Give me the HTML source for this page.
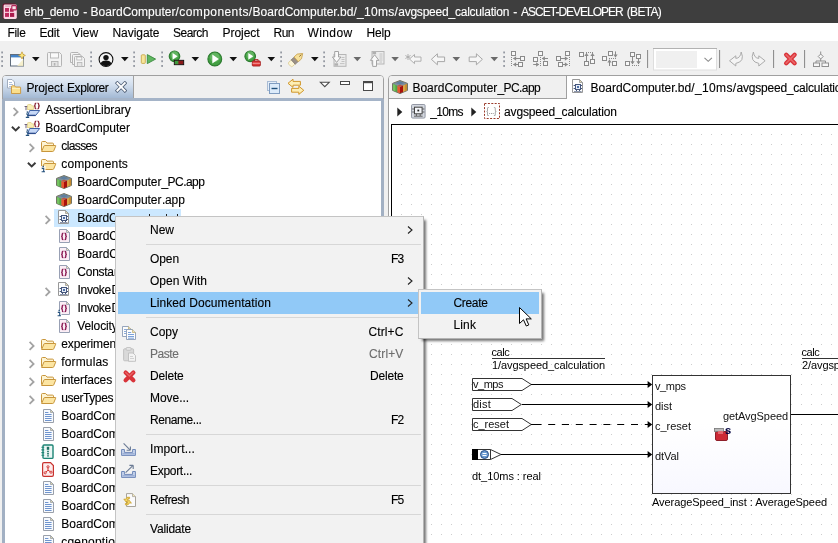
<!DOCTYPE html>
<html><head><meta charset="utf-8"><title>ASCET-DEVELOPER</title>
<style>
html,body{margin:0;padding:0;}
body{width:838px;height:543px;overflow:hidden;background:#f0f0f0;font-family:"Liberation Sans",sans-serif;position:relative;}
#root{position:absolute;left:0;top:0;width:838px;height:543px;overflow:hidden;will-change:transform;}
#root div,#root span,#root svg{position:absolute;box-sizing:border-box;}
.t{white-space:nowrap;display:block;-webkit-text-stroke:0.12px currentColor;}
.d{font-family:"Liberation Sans",sans-serif;-webkit-text-stroke:0;}
</style></head><body><div id="root">
<div style="left:0px;top:0px;width:838px;height:23px;background:#3e3e3e;"></div>
<span class="t " style="left:24px;top:3.50px;height:16px;line-height:16px;font-size:12px;color:#fff;letter-spacing:-0.214px;">ehb_demo</span>
<span class="t " style="left:83.3px;top:3.50px;height:16px;line-height:16px;font-size:12px;color:#fff;">-</span>
<span class="t " style="left:90.5px;top:3.50px;height:16px;line-height:16px;font-size:12px;color:#fff;letter-spacing:0.030px;">BoardComputer</span>
<span class="t " style="left:175.5px;top:3.50px;height:16px;line-height:16px;font-size:12px;color:#fff;letter-spacing:0.421px;">/components/</span>
<span class="t " style="left:252.6px;top:3.50px;height:16px;line-height:16px;font-size:12px;color:#fff;letter-spacing:0.004px;">BoardComputer.bd</span>
<span class="t " style="left:353.5px;top:3.50px;height:16px;line-height:16px;font-size:12px;color:#fff;letter-spacing:0.259px;">/_10ms/</span>
<span class="t " style="left:398.2px;top:3.50px;height:16px;line-height:16px;font-size:12px;color:#fff;letter-spacing:-0.221px;">avgspeed_calculation</span>
<span class="t " style="left:513.3px;top:3.50px;height:16px;line-height:16px;font-size:12px;color:#fff;">-</span>
<span class="t " style="left:521px;top:3.50px;height:16px;line-height:16px;font-size:12px;color:#fff;letter-spacing:-0.994px;">ASCET-DEVELOPER</span>
<span class="t " style="left:626.8px;top:3.50px;height:16px;line-height:16px;font-size:12px;color:#fff;letter-spacing:-0.708px;">(BETA)</span>
<div style="left:0px;top:23px;width:838px;height:18px;background:#fff;"></div>
<span class="t " style="left:7.5px;top:24.50px;height:16px;line-height:16px;font-size:12px;color:#000;letter-spacing:-0.334px;">File</span>
<span class="t " style="left:39.5px;top:24.50px;height:16px;line-height:16px;font-size:12px;color:#000;letter-spacing:-0.170px;">Edit</span>
<span class="t " style="left:72.5px;top:24.50px;height:16px;line-height:16px;font-size:12px;color:#000;letter-spacing:-0.074px;">View</span>
<span class="t " style="left:112.5px;top:24.50px;height:16px;line-height:16px;font-size:12px;color:#000;letter-spacing:-0.045px;">Navigate</span>
<span class="t " style="left:173px;top:24.50px;height:16px;line-height:16px;font-size:12px;color:#000;letter-spacing:-0.504px;">Search</span>
<span class="t " style="left:222.5px;top:24.50px;height:16px;line-height:16px;font-size:12px;color:#000;letter-spacing:-0.050px;">Project</span>
<span class="t " style="left:273.5px;top:24.50px;height:16px;line-height:16px;font-size:12px;color:#000;letter-spacing:-0.505px;">Run</span>
<span class="t " style="left:307.5px;top:24.50px;height:16px;line-height:16px;font-size:12px;color:#000;letter-spacing:0.387px;">Window</span>
<span class="t " style="left:366.5px;top:24.50px;height:16px;line-height:16px;font-size:12px;color:#000;letter-spacing:-0.170px;">Help</span>
<div style="left:0px;top:41px;width:838px;height:34px;background:#f0f0f0;"></div>
<div style="left:2px;top:75px;width:382px;height:470px;background:#fff;border:1px solid #a0a0a0;border-radius:4px 4px 0 0;"></div>
<div style="left:3px;top:76px;width:380px;height:22px;background:#f0f0f0;border-radius:3px 3px 0 0;"></div>
<div style="left:3px;top:76px;width:131px;height:22px;background:linear-gradient(#e9eff7,#d3dfee 40%,#a3b9d4);border-right:1px solid #a0a0a0;border-radius:3px 0 0 0;"></div>
<div style="left:3px;top:98px;width:380px;height:3px;background:#a5b4c8;"></div>
<div style="left:2px;top:99px;width:3px;height:444px;background:#a2b0c3;"></div>
<div style="left:381px;top:99px;width:3px;height:444px;background:#a2b0c3;"></div>
<span class="t " style="left:26.4px;top:79.50px;height:16px;line-height:16px;font-size:12px;color:#000;letter-spacing:-0.078px;">Project</span>
<span class="t " style="left:67px;top:79.50px;height:16px;line-height:16px;font-size:12px;color:#000;letter-spacing:-0.423px;">Explorer</span>
<span class="t " style="left:45.3px;top:102.00px;height:16px;line-height:16px;font-size:12px;color:#000;letter-spacing:-0.088px;">AssertionLibrary</span>
<span class="t " style="left:45.3px;top:120.00px;height:16px;line-height:16px;font-size:12px;color:#000;letter-spacing:-0.001px;">BoardComputer</span>
<span class="t " style="left:61.3px;top:138.00px;height:16px;line-height:16px;font-size:12px;color:#000;letter-spacing:-0.616px;">classes</span>
<span class="t " style="left:61.3px;top:156.00px;height:16px;line-height:16px;font-size:12px;color:#000;letter-spacing:0.133px;">components</span>
<span class="t " style="left:77.3px;top:174.00px;height:16px;line-height:16px;font-size:12px;color:#000;letter-spacing:-0.047px;">BoardComputer</span>
<span class="t " style="left:161.5px;top:174.00px;height:16px;line-height:16px;font-size:12px;color:#000;letter-spacing:-0.557px;">_PC.app</span>
<span class="t " style="left:77.3px;top:192.00px;height:16px;line-height:16px;font-size:12px;color:#000;letter-spacing:-0.047px;">BoardComputer</span>
<span class="t " style="left:161.9px;top:192.00px;height:16px;line-height:16px;font-size:12px;color:#000;letter-spacing:-0.139px;">.app</span>
<div style="left:54px;top:209px;width:127px;height:18px;background:#cce8ff;"></div>
<span class="t " style="left:77.3px;top:210.00px;height:16px;line-height:16px;font-size:12px;color:#000;letter-spacing:-0.047px;">BoardComputer</span>
<span class="t " style="left:161.9px;top:210.00px;height:16px;line-height:16px;font-size:12px;color:#000;letter-spacing:0.473px;">.bd</span>
<span class="t " style="left:77.3px;top:228.00px;height:16px;line-height:16px;font-size:12px;color:#000;letter-spacing:-0.001px;">BoardComputer</span>
<span class="t " style="left:162.4px;top:228.00px;height:16px;line-height:16px;font-size:12px;color:#000;">.esdl</span>
<span class="t " style="left:77.3px;top:246.00px;height:16px;line-height:16px;font-size:12px;color:#000;letter-spacing:-0.001px;">BoardComputer</span>
<span class="t " style="left:162.4px;top:246.00px;height:16px;line-height:16px;font-size:12px;color:#000;">Types.esdl</span>
<span class="t " style="left:77.3px;top:264.00px;height:16px;line-height:16px;font-size:12px;color:#000;letter-spacing:-0.254px;">Consta</span>
<span class="t " style="left:114px;top:264.00px;height:16px;line-height:16px;font-size:12px;color:#000;">nts.esdl</span>
<span class="t " style="left:77.6px;top:282.00px;height:16px;line-height:16px;font-size:12px;color:#000;letter-spacing:-0.359px;">Invoke</span>
<span class="t " style="left:111.6px;top:282.00px;height:16px;line-height:16px;font-size:12px;color:#000;">Display.bd</span>
<span class="t " style="left:77.6px;top:300.00px;height:16px;line-height:16px;font-size:12px;color:#000;letter-spacing:-0.359px;">Invoke</span>
<span class="t " style="left:111.6px;top:300.00px;height:16px;line-height:16px;font-size:12px;color:#000;">Display.esdl</span>
<span class="t " style="left:77.3px;top:318.00px;height:16px;line-height:16px;font-size:12px;color:#000;letter-spacing:-0.122px;">Velocit</span>
<span class="t " style="left:111.8px;top:318.00px;height:16px;line-height:16px;font-size:12px;color:#000;">yCalculation.esdl</span>
<span class="t " style="left:61.3px;top:336.00px;height:16px;line-height:16px;font-size:12px;color:#000;letter-spacing:-0.151px;">experiments</span>
<span class="t " style="left:61.3px;top:354.00px;height:16px;line-height:16px;font-size:12px;color:#000;letter-spacing:0.136px;">formulas</span>
<span class="t " style="left:61.3px;top:372.00px;height:16px;line-height:16px;font-size:12px;color:#000;letter-spacing:-0.133px;">interfaces</span>
<span class="t " style="left:61.3px;top:390.00px;height:16px;line-height:16px;font-size:12px;color:#000;letter-spacing:-0.407px;">userTypes</span>
<span class="t " style="left:61.3px;top:408.00px;height:16px;line-height:16px;font-size:12px;color:#000;letter-spacing:-0.001px;">BoardComputer</span>
<span class="t " style="left:146.4px;top:408.00px;height:16px;line-height:16px;font-size:12px;color:#000;">.amd</span>
<span class="t " style="left:61.3px;top:426.00px;height:16px;line-height:16px;font-size:12px;color:#000;letter-spacing:-0.001px;">BoardComputer</span>
<span class="t " style="left:146.4px;top:426.00px;height:16px;line-height:16px;font-size:12px;color:#000;">.app</span>
<span class="t " style="left:61.3px;top:444.00px;height:16px;line-height:16px;font-size:12px;color:#000;letter-spacing:-0.001px;">BoardComputer</span>
<span class="t " style="left:146.4px;top:444.00px;height:16px;line-height:16px;font-size:12px;color:#000;">.html</span>
<span class="t " style="left:61.3px;top:462.00px;height:16px;line-height:16px;font-size:12px;color:#000;letter-spacing:-0.001px;">BoardComputer</span>
<span class="t " style="left:146.4px;top:462.00px;height:16px;line-height:16px;font-size:12px;color:#000;">.pdf</span>
<span class="t " style="left:61.3px;top:480.00px;height:16px;line-height:16px;font-size:12px;color:#000;letter-spacing:-0.001px;">BoardComputer</span>
<span class="t " style="left:146.4px;top:480.00px;height:16px;line-height:16px;font-size:12px;color:#000;">.a2l</span>
<span class="t " style="left:61.3px;top:498.00px;height:16px;line-height:16px;font-size:12px;color:#000;letter-spacing:-0.001px;">BoardComputer</span>
<span class="t " style="left:146.4px;top:498.00px;height:16px;line-height:16px;font-size:12px;color:#000;">.hex</span>
<span class="t " style="left:61.3px;top:516.00px;height:16px;line-height:16px;font-size:12px;color:#000;letter-spacing:-0.001px;">BoardComputer</span>
<span class="t " style="left:146.4px;top:516.00px;height:16px;line-height:16px;font-size:12px;color:#000;">.map</span>
<span class="t " style="left:61.3px;top:534.00px;height:16px;line-height:16px;font-size:12px;color:#000;letter-spacing:0.184px;">cgenoptio</span>
<span class="t " style="left:115.2px;top:534.00px;height:16px;line-height:16px;font-size:12px;color:#000;">ns.ini</span>
<div style="left:388px;top:75px;width:460px;height:470px;background:#fff;border:1px solid #a0a0a0;border-radius:4px 0 0 0;"></div>
<div style="left:389px;top:76px;width:177px;height:22px;background:#f0f0f0;border-radius:3px 0 0 0;"></div>
<div style="left:389px;top:98px;width:460px;height:1px;background:#a0a0a0;"></div>
<div style="left:566px;top:76px;width:280px;height:23px;background:#fff;border-left:1px solid #a0a0a0;"></div>
<span class="t " style="left:412.4px;top:79.50px;height:16px;line-height:16px;font-size:12px;color:#000;letter-spacing:0.022px;">BoardComputer</span>
<span class="t " style="left:497.4px;top:79.50px;height:16px;line-height:16px;font-size:12px;color:#000;letter-spacing:-0.557px;">_PC.app</span>
<span class="t " style="left:590.6px;top:79.50px;height:16px;line-height:16px;font-size:12px;color:#000;letter-spacing:-0.008px;">BoardComputer.bd</span>
<span class="t " style="left:691.3px;top:79.50px;height:16px;line-height:16px;font-size:12px;color:#000;letter-spacing:0.359px;">/_10ms/</span>
<span class="t " style="left:736.6px;top:79.50px;height:16px;line-height:16px;font-size:12px;color:#000;letter-spacing:-0.221px;">avgspeed_calculation</span>
<span class="t " style="left:430.2px;top:104.00px;height:16px;line-height:16px;font-size:12px;color:#000;letter-spacing:-0.684px;">_10ms</span>
<span class="t " style="left:504px;top:104.00px;height:16px;line-height:16px;font-size:12px;color:#000;letter-spacing:-0.131px;">avgspeed_calculation</span>
<div style="left:391px;top:124px;width:450px;height:420px;background-color:#fff;border-left:1px solid #000;border-top:1px solid #000;background-image:radial-gradient(circle at 0.5px 0.5px,#cdcdcd 0.6px,transparent 0.8px);background-size:10px 10px;background-position:-1px -1px;"></div>
<svg style="left:0px;top:0px;" width="838" height="76" viewBox="0 0 838 76"><rect x="1.3" y="51.5" width="1.6" height="1.9" fill="#8b909a"/><rect x="1.3" y="56" width="1.6" height="1.9" fill="#8b909a"/><rect x="1.3" y="60.3" width="1.6" height="1.9" fill="#8b909a"/><rect x="1.3" y="65" width="1.6" height="1.9" fill="#8b909a"/><rect x="90.3" y="51.5" width="1.6" height="1.9" fill="#8b909a"/><rect x="90.3" y="56" width="1.6" height="1.9" fill="#8b909a"/><rect x="90.3" y="60.3" width="1.6" height="1.9" fill="#8b909a"/><rect x="90.3" y="65" width="1.6" height="1.9" fill="#8b909a"/><rect x="133.3" y="51.5" width="1.6" height="1.9" fill="#8b909a"/><rect x="133.3" y="56" width="1.6" height="1.9" fill="#8b909a"/><rect x="133.3" y="60.3" width="1.6" height="1.9" fill="#8b909a"/><rect x="133.3" y="65" width="1.6" height="1.9" fill="#8b909a"/><rect x="161.3" y="51.5" width="1.6" height="1.9" fill="#8b909a"/><rect x="161.3" y="56" width="1.6" height="1.9" fill="#8b909a"/><rect x="161.3" y="60.3" width="1.6" height="1.9" fill="#8b909a"/><rect x="161.3" y="65" width="1.6" height="1.9" fill="#8b909a"/><rect x="280.3" y="51.5" width="1.6" height="1.9" fill="#8b909a"/><rect x="280.3" y="56" width="1.6" height="1.9" fill="#8b909a"/><rect x="280.3" y="60.3" width="1.6" height="1.9" fill="#8b909a"/><rect x="280.3" y="65" width="1.6" height="1.9" fill="#8b909a"/><rect x="323.3" y="51.5" width="1.6" height="1.9" fill="#8b909a"/><rect x="323.3" y="56" width="1.6" height="1.9" fill="#8b909a"/><rect x="323.3" y="60.3" width="1.6" height="1.9" fill="#8b909a"/><rect x="323.3" y="65" width="1.6" height="1.9" fill="#8b909a"/><rect x="503.3" y="51.5" width="1.6" height="1.9" fill="#8b909a"/><rect x="503.3" y="56" width="1.6" height="1.9" fill="#8b909a"/><rect x="503.3" y="60.3" width="1.6" height="1.9" fill="#8b909a"/><rect x="503.3" y="65" width="1.6" height="1.9" fill="#8b909a"/><path d="M32 57 h7.6 l-3.8 4.3 z" fill="#111"/><path d="M121 57 h7.6 l-3.8 4.3 z" fill="#111"/><path d="M191.5 57 h7.6 l-3.8 4.3 z" fill="#111"/><path d="M229.5 57 h7.6 l-3.8 4.3 z" fill="#111"/><path d="M267.5 57 h7.6 l-3.8 4.3 z" fill="#111"/><path d="M311 57 h7.6 l-3.8 4.3 z" fill="#111"/><path d="M353.5 57 h7.6 l-3.8 4.3 z" fill="#6a6a6a"/><path d="M391.3 57 h7.6 l-3.8 4.3 z" fill="#6a6a6a"/><path d="M452.5 57 h7.6 l-3.8 4.3 z" fill="#6a6a6a"/><path d="M490.5 57 h7.6 l-3.8 4.3 z" fill="#6a6a6a"/><rect x="647.1" y="50" width="1" height="18" fill="#858585"/><rect x="719.1" y="50" width="1" height="18" fill="#858585"/><rect x="773.1" y="50" width="1" height="18" fill="#858585"/><rect x="804.1" y="50" width="1" height="18" fill="#858585"/><g transform="translate(10 52)"><rect x=".5" y="2.5" width="13" height="11.5" fill="#fbfdff" stroke="#5f6c7c"/><rect x="1" y="3" width="12" height="2.4" fill="#4482c6"/><path d="M7 14 L13.5 7 V14 Z" fill="#f5ecc0" opacity=".8"/><path d="M12 -.2 L13.1 2.3 L15.4 3.4 L13.1 4.5 L12 7 L10.9 4.5 L8.6 3.4 L10.9 2.3 Z" fill="#fbe67a" stroke="#c9a040" stroke-width=".8"/></g><g transform="translate(47 52)"><path d="M1.5 .5 H12.5 L14.5 2.5 V13.5 Q14.5 14.5 13.5 14.5 H1.5 Q.5 14.5 .5 13.5 V1.5 Q.5 .5 1.5 .5 Z" fill="#f3f3f3" stroke="#b4b4b4"/><rect x="3.5" y=".8" width="8" height="5.2" fill="#fafafa" stroke="#b4b4b4" stroke-width=".9"/><rect x="4.5" y="9.5" width="6.5" height="5" fill="#e4e4e4" stroke="#b4b4b4" stroke-width=".9"/><rect x="6.8" y="11" width="1.6" height="2.6" fill="#b4b4b4"/></g><g transform="translate(70 52)"><path d="M1.5 .5 H8 L10.5 3 V10.5 H.5 V1.5 Q.5 .5 1.5 .5Z" fill="#f3f3f3" stroke="#b4b4b4"/><path d="M3.5 2.5 H10 L12.5 5 V12.5 H2.5 V3.5 Q2.5 2.5 3.5 2.5Z" fill="#f3f3f3" stroke="#b4b4b4"/><path d="M5.5 4.5 H12.5 L14.5 6.5 V14.5 H4.5 V5.5 Q4.5 4.5 5.5 4.5Z" fill="#f3f3f3" stroke="#b4b4b4"/><rect x="6.8" y="5" width="5" height="3" fill="#fafafa" stroke="#b4b4b4" stroke-width=".8"/><rect x="7.3" y="10.5" width="4.6" height="4" fill="#e4e4e4" stroke="#b4b4b4" stroke-width=".8"/></g><g transform="translate(98.5 52)"><circle cx="7.5" cy="7.5" r="6.9" fill="#f4f4f4" stroke="#111" stroke-width="1.1"/><circle cx="7.5" cy="5.6" r="2.7" fill="#111"/><path d="M2.2 11.6 Q3 8.6 7.5 8.6 Q12 8.6 12.8 11.6 Q10.8 14.2 7.5 14.2 Q4.2 14.2 2.2 11.6 Z" fill="#111"/></g><g transform="translate(140 52)"><rect x="1.3" y="2.8" width="4" height="8.6" rx=".8" fill="#f7e59a" stroke="#c8a94a" stroke-width=".9"/><path d="M7.3 2.6 L15.6 7.1 L7.3 11.6 Z" fill="#5fb660" stroke="#3a8a3d" stroke-width=".9" stroke-linejoin="round"/></g><circle cx="174.5" cy="56.3" r="5.3" fill="#43a043" stroke="#2b7a2e" stroke-width="1.1"/><circle cx="174.5" cy="54.974999999999994" r="3.7099999999999995" fill="#7cc77a" opacity=".55"/><path d="M172.592 52.907999999999994 L177.574 56.3 L172.592 59.692 Z" fill="#fff"/><rect x="174.3" y="60.3" width="9.4" height="4.4" fill="#8b1a1a" stroke="#111" stroke-width=".9"/><rect x="174.8" y="60.8" width="3.6" height="3.4" fill="#3f9a3f"/><circle cx="214.8" cy="59" r="6.9" fill="#43a043" stroke="#2b7a2e" stroke-width="1.1"/><circle cx="214.8" cy="57.275" r="4.83" fill="#7cc77a" opacity=".55"/><path d="M212.316 54.584 L218.80200000000002 59 L212.316 63.416 Z" fill="#fff"/><circle cx="250.2" cy="56.3" r="5.3" fill="#43a043" stroke="#2b7a2e" stroke-width="1.1"/><circle cx="250.2" cy="54.974999999999994" r="3.7099999999999995" fill="#7cc77a" opacity=".55"/><path d="M248.292 52.907999999999994 L253.274 56.3 L248.292 59.692 Z" fill="#fff"/><rect x="252.3" y="61" width="8" height="5" rx=".8" fill="#e03a3a" stroke="#a01818" stroke-width=".9"/><path d="M254.5 61 v-1.4 h3.6 v1.4" fill="none" stroke="#a01818" stroke-width=".9"/><path d="M252.5 63.3 h7.6" stroke="#f7b0b0" stroke-width=".8"/><g transform="translate(288 51.5)"><g transform="rotate(-42 8 8)"><rect x="-0.5" y="5.2" width="5.2" height="5.6" rx="1.6" fill="#fdf6d8" stroke="#d9c78a" stroke-width=".7"/><rect x="4.2" y="5" width="4" height="6" fill="#9a9088" stroke="#756c64" stroke-width=".6"/><path d="M8.2 4.8 H12.5 L17 8 L12.5 11.2 H8.2 Z" fill="#f6e09a" stroke="#c9a24e" stroke-width=".8"/><path d="M12.4 8 H15.2" stroke="#7a5a20" stroke-width=".8"/></g></g><g transform="translate(332 51)"><rect x="2" y="3.5" width="12" height="11.8" fill="#ececec" stroke="#b6b6b6"/><path d="M9.5 6.5h3M9.5 8.5h3M9.5 10.5h3M8 12.6h4.5" stroke="#bdbdbd" stroke-width=".9"/><rect x="2.5" y="12.3" width="3.6" height="2.4" fill="#b0b0b0"/><path d="M2.7 .5 H6.5 V6 H8.9 L4.6 11.4 L.4 6 H2.7 Z" fill="#fafafa" stroke="#a4a4a4" stroke-width="1" stroke-linejoin="round"/></g><g transform="translate(370 51)"><rect x="2" y=".5" width="12" height="12.5" fill="#ececec" stroke="#b6b6b6"/><path d="M9.5 3h3M9.5 5h3M9.5 7h3M9.5 9h3M9.5 11h2.5" stroke="#bdbdbd" stroke-width=".9"/><rect x="2.5" y="1" width="3.6" height="2.2" fill="#b0b0b0"/><path d="M2.7 15.4 H6.5 V9.4 H8.9 L4.6 3.8 L.4 9.4 H2.7 Z" fill="#fafafa" stroke="#a4a4a4" stroke-width="1" stroke-linejoin="round"/></g><g transform="translate(405 51)"><path d="M3 3 v6 M.4 4.5 l5.2 3 M.4 7.5 l5.2 -3" stroke="#a8a8a8" stroke-width=".9"/><path d="M4.5 8 L9.5 3.5 V6 H16 V10.2 H9.5 V12.6 Z" fill="#f6f6f6" stroke="#a8a8a8" stroke-width=".9"/></g><g transform="translate(430.6 51.8)"><path d="M.8 7.5 L6.8 2 V5.2 H14 V9.8 H6.8 V13 Z" fill="#f6f6f6" stroke="#a8a8a8" stroke-width="1" stroke-linejoin="round"/></g><g transform="translate(483.20000000000005 51.8) scale(-1 1)"><path d="M.8 7.5 L6.8 2 V5.2 H14 V9.8 H6.8 V13 Z" fill="#f6f6f6" stroke="#a8a8a8" stroke-width="1" stroke-linejoin="round"/></g><rect x="511.5" y="51.5" width="4" height="4" fill="#f7f7f7" stroke="#8a8a8a" stroke-width="1"/><rect x="520.5" y="56.5" width="4" height="4" fill="#f7f7f7" stroke="#8a8a8a" stroke-width="1"/><rect x="518.5" y="62.5" width="4" height="4" fill="#f7f7f7" stroke="#8a8a8a" stroke-width="1"/><path d="M511.5 57 V66" stroke="#8a8a8a" stroke-width="1" stroke-dasharray="1 1"/><path d="M513.4 58.5 H520" stroke="#8a8a8a" stroke-width="1"/><path d="M513.1 58.5 l3 -2.2 v4.4 z" fill="#8a8a8a"/><path d="M513.4 64.5 H518" stroke="#8a8a8a" stroke-width="1"/><path d="M513.1 64.5 l3 -2.2 v4.4 z" fill="#8a8a8a"/><rect x="538.5" y="51.5" width="4" height="4" fill="#f7f7f7" stroke="#8a8a8a" stroke-width="1"/><rect x="533.5" y="57.5" width="4" height="4" fill="#f7f7f7" stroke="#8a8a8a" stroke-width="1"/><rect x="543.5" y="61.5" width="4" height="4" fill="#f7f7f7" stroke="#8a8a8a" stroke-width="1"/><path d="M540.5 57 V66" stroke="#8a8a8a" stroke-width="1" stroke-dasharray="1 1"/><path d="M542.2 58.5 H548" stroke="#8a8a8a" stroke-width="1"/><path d="M541.9000000000001 58.5 l3 -2.2 v4.4 z" fill="#8a8a8a"/><path d="M533.2 64.5 H538.8" stroke="#8a8a8a" stroke-width="1"/><path d="M539.0999999999999 64.5 l-3 -2.2 v4.4 z" fill="#8a8a8a"/><rect x="565.5" y="51.5" width="4" height="4" fill="#f7f7f7" stroke="#8a8a8a" stroke-width="1"/><rect x="556.5" y="56.5" width="4" height="4" fill="#f7f7f7" stroke="#8a8a8a" stroke-width="1"/><rect x="558.5" y="62.5" width="4" height="4" fill="#f7f7f7" stroke="#8a8a8a" stroke-width="1"/><path d="M569.5 57 V66" stroke="#8a8a8a" stroke-width="1" stroke-dasharray="1 1"/><path d="M561 58.5 H567.6" stroke="#8a8a8a" stroke-width="1"/><path d="M567.9 58.5 l-3 -2.2 v4.4 z" fill="#8a8a8a"/><path d="M563 64.5 H567.6" stroke="#8a8a8a" stroke-width="1"/><path d="M567.9 64.5 l-3 -2.2 v4.4 z" fill="#8a8a8a"/><rect x="579.5" y="52.5" width="4" height="4" fill="#f7f7f7" stroke="#8a8a8a" stroke-width="1"/><rect x="590.5" y="59.5" width="4" height="4" fill="#f7f7f7" stroke="#8a8a8a" stroke-width="1"/><rect x="584.5" y="61.5" width="4" height="4" fill="#f7f7f7" stroke="#8a8a8a" stroke-width="1"/><path d="M586 52.5 H594" stroke="#8a8a8a" stroke-width="1" stroke-dasharray="1 1"/><path d="M586.5 53.2 V61" stroke="#8a8a8a" stroke-width="1"/><path d="M586.5 52.900000000000006 l-2.2 3 h4.4 z" fill="#8a8a8a"/><path d="M592.5 53.2 V59" stroke="#8a8a8a" stroke-width="1"/><path d="M592.5 52.900000000000006 l-2.2 3 h4.4 z" fill="#8a8a8a"/><rect x="608.5" y="51.5" width="4" height="4" fill="#f7f7f7" stroke="#8a8a8a" stroke-width="1"/><rect x="602.5" y="56.5" width="4" height="4" fill="#f7f7f7" stroke="#8a8a8a" stroke-width="1"/><rect x="612.5" y="61.5" width="4" height="4" fill="#f7f7f7" stroke="#8a8a8a" stroke-width="1"/><path d="M609 58.5 H617" stroke="#8a8a8a" stroke-width="1" stroke-dasharray="1 1"/><path d="M615.5 51.4 V57.2" stroke="#8a8a8a" stroke-width="1"/><path d="M615.5 57.5 l-2.2 -3 h4.4 z" fill="#8a8a8a"/><path d="M609.5 59.8 V66" stroke="#8a8a8a" stroke-width="1"/><path d="M609.5 59.5 l-2.2 3 h4.4 z" fill="#8a8a8a"/><rect x="630.5" y="52.5" width="4" height="4" fill="#f7f7f7" stroke="#8a8a8a" stroke-width="1"/><rect x="636.5" y="54.5" width="4" height="4" fill="#f7f7f7" stroke="#8a8a8a" stroke-width="1"/><rect x="625.5" y="61.5" width="4" height="4" fill="#f7f7f7" stroke="#8a8a8a" stroke-width="1"/><path d="M632 65.5 H640" stroke="#8a8a8a" stroke-width="1" stroke-dasharray="1 1"/><path d="M632.5 57 V64" stroke="#8a8a8a" stroke-width="1"/><path d="M632.5 64.3 l-2.2 -3 h4.4 z" fill="#8a8a8a"/><path d="M638.5 59 V64" stroke="#8a8a8a" stroke-width="1"/><path d="M638.5 64.3 l-2.2 -3 h4.4 z" fill="#8a8a8a"/><rect x="653.5" y="48.5" width="63" height="21.5" fill="#fff" stroke="#dedede"/><path d="M653 48.5 H717" stroke="#b2b2b2"/><rect x="656" y="51" width="41" height="17" fill="#f0f0f0"/><path d="M704.5 57.8 L708.2 61.3 L711.9 57.8" fill="none" stroke="#8a8a8a" stroke-width="1.1"/><g transform="translate(728.8 51.2)"><path d="M.7 9.6 L7 4.6 V7.2 Q11.6 7 12.4 .8 Q16.4 10.4 7 12.2 V14.8 Z" fill="#f4f4f4" stroke="#aaaaaa" stroke-width="1" stroke-linejoin="round"/></g><g transform="translate(765.8 51.2) scale(-1 1)"><path d="M.7 9.6 L7 4.6 V7.2 Q11.6 7 12.4 .8 Q16.4 10.4 7 12.2 V14.8 Z" fill="#f4f4f4" stroke="#aaaaaa" stroke-width="1" stroke-linejoin="round"/></g><path d="M786.2 54.8 L794.6 63.2 M794.6 54.8 L786.2 63.2" stroke="#d83238" stroke-width="4.4" stroke-linecap="round"/><path d="M786.2 54.8 L794.6 63.2 M794.6 54.8 L786.2 63.2" stroke="#f27a7c" stroke-width="1.8" stroke-linecap="round" opacity=".7"/><g transform="translate(813 51)"><path d="M7.7 .5 V3 M7.7 8 V10 M3 12 V10 H12.5 V12" fill="none" stroke="#8f8f8f"/><path d="M7.7 3 L10.2 5.5 L7.7 8 L5.2 5.5 Z" fill="#f6f6f6" stroke="#8f8f8f"/><rect x=".5" y="12" width="6" height="3.5" fill="#f6f6f6" stroke="#8f8f8f"/><rect x="9" y="12" width="6.5" height="3.5" fill="#f6f6f6" stroke="#8f8f8f"/></g></svg>
<svg style="left:2px;top:3px;" width="17" height="17" viewBox="0 0 17 17"><rect x=".6" y=".6" width="13.6" height="15.2" rx="1.6" fill="#6d0f2c"/><rect x="1.6" y="1.4" width="13.2" height="14.6" rx="1.4" fill="#fbd6e4"/><path d="M3.2 3.1 H8.4" stroke="#c9a3b2" stroke-width="1"/><rect x="3" y="5" width="4" height="3.8" fill="#bd2a5e"/><rect x="8" y="5.4" width="3.6" height="3.4" fill="#b42256"/><rect x="3" y="9.9" width="4" height="4" fill="#bd2a5e"/><rect x="8" y="9.9" width="4.2" height="4" fill="#aa1a4c"/><rect x="9.8" y="2.6" width="4.6" height="4.2" rx=".6" fill="#fbe4ec" stroke="#b12a5a" stroke-width="1.2"/></svg>
<svg style="left:12px;top:107px;" width="8" height="10" viewBox="0 0 8 10"><path d="M1.6 .9 L5.6 4.9 L1.6 8.9" fill="none" stroke="#a3a3a3" stroke-width="1.8"/></svg>
<svg style="left:24px;top:102px;overflow:visible;" width="17" height="17" viewBox="0 0 17 17"><path d="M3.5 8 V3.4 Q3.5 2.5 4.4 2.5 H7 L8.2 3.9 H9.6 V7.5 H4" fill="#f9efb6" stroke="#e4d28e" stroke-width=".9"/><path d="M.6 4.5 H3.2 M2 4.5 V8.2" stroke="#6e6078" stroke-width="1" fill="none"/><path d="M3.6 13.5 L5.7 8.5 H15.7 L11.6 13.5 Z" fill="#c6d8f6" stroke="#3f62a4" stroke-width="1" stroke-linejoin="round"/><path d="M3.8 13.4 H11.6" stroke="#2c4c8c" stroke-width="1.4"/><path d="M12.299999999999999 1 Q11.1 1 11.1 2.0633333333333335 V3.0300000000000002 Q11.1 3.9 10.0 3.9 Q11.1 3.9 11.1 4.77 V5.736666666666667 Q11.1 6.8 12.299999999999999 6.8 M13.5 1 Q14.7 1 14.7 2.0633333333333335 V3.0300000000000002 Q14.7 3.9 15.799999999999999 3.9 Q14.7 3.9 14.7 4.77 V5.736666666666667 Q14.7 6.8 13.5 6.8" fill="none" stroke="#8c2838" stroke-width="1.25"/><rect x="2.7" y="9.4" width="1.4" height="1.4" fill="#24507c"/><path d="M2.0 12.0 H3.9000000000000004 V15.0 M1.8 15.4 H5.2" fill="none" stroke="#24507c" stroke-width="1.1"/></svg>
<svg style="left:11px;top:125.5px;" width="10" height="6" viewBox="0 0 10 6"><path d="M.9 .8 L4.7 4.5 L8.5 .8" fill="none" stroke="#3a3a3a" stroke-width="1.9"/></svg>
<svg style="left:24px;top:120px;overflow:visible;" width="17" height="17" viewBox="0 0 17 17"><path d="M3.5 8 V3.4 Q3.5 2.5 4.4 2.5 H7 L8.2 3.9 H9.6 V7.5 H4" fill="#f9efb6" stroke="#e4d28e" stroke-width=".9"/><path d="M.6 4.5 H3.2 M2 4.5 V8.2" stroke="#6e6078" stroke-width="1" fill="none"/><path d="M3.6 13.5 L5.7 8.5 H15.7 L11.6 13.5 Z" fill="#c6d8f6" stroke="#3f62a4" stroke-width="1" stroke-linejoin="round"/><path d="M3.8 13.4 H11.6" stroke="#2c4c8c" stroke-width="1.4"/><path d="M12.299999999999999 1 Q11.1 1 11.1 2.0633333333333335 V3.0300000000000002 Q11.1 3.9 10.0 3.9 Q11.1 3.9 11.1 4.77 V5.736666666666667 Q11.1 6.8 12.299999999999999 6.8 M13.5 1 Q14.7 1 14.7 2.0633333333333335 V3.0300000000000002 Q14.7 3.9 15.799999999999999 3.9 Q14.7 3.9 14.7 4.77 V5.736666666666667 Q14.7 6.8 13.5 6.8" fill="none" stroke="#8c2838" stroke-width="1.25"/><rect x="2.7" y="9.4" width="1.4" height="1.4" fill="#24507c"/><path d="M2.0 12.0 H3.9000000000000004 V15.0 M1.8 15.4 H5.2" fill="none" stroke="#24507c" stroke-width="1.1"/></svg>
<svg style="left:28px;top:143px;" width="8" height="10" viewBox="0 0 8 10"><path d="M1.6 .9 L5.6 4.9 L1.6 8.9" fill="none" stroke="#a3a3a3" stroke-width="1.8"/></svg>
<svg style="left:41px;top:141px;overflow:visible;" width="16" height="12" viewBox="0 0 16 12"><path d="M.5 9.5 V1.5 Q.5 .5 1.5 .5 H4.6 L6 2.1 H11.5 Q12.5 2.1 12.5 3.1 V4.5" fill="#fdf4d4" stroke="#c8963c" stroke-width="1"/><path d="M.6 10.5 L3 4.9 Q3.2 4.5 3.8 4.5 H14.4 Q15 4.5 14.7 5.2 L12.7 9.9 Q12.4 10.5 11.7 10.5 Z" fill="#fce5a2" stroke="#c8963c" stroke-width="1" stroke-linejoin="round"/></svg>
<svg style="left:27px;top:161.5px;" width="10" height="6" viewBox="0 0 10 6"><path d="M.9 .8 L4.7 4.5 L8.5 .8" fill="none" stroke="#3a3a3a" stroke-width="1.9"/></svg>
<svg style="left:41px;top:159px;overflow:visible;" width="16" height="12" viewBox="0 0 16 12"><path d="M.5 9.5 V1.5 Q.5 .5 1.5 .5 H4.6 L6 2.1 H11.5 Q12.5 2.1 12.5 3.1 V4.5" fill="#fdf4d4" stroke="#c8963c" stroke-width="1"/><path d="M.6 10.5 L3 4.9 Q3.2 4.5 3.8 4.5 H14.4 Q15 4.5 14.7 5.2 L12.7 9.9 Q12.4 10.5 11.7 10.5 Z" fill="#fce5a2" stroke="#c8963c" stroke-width="1" stroke-linejoin="round"/></svg>
<svg style="left:40.8px;top:164.6px;" width="6" height="9" viewBox="0 0 6 9"><rect x="0" y="1" width="4.6" height="7.6" fill="#fff" opacity=".85"/><rect x="1.5" y="0.8" width="1.4" height="1.4" fill="#24507c"/><path d="M0.8 3.4000000000000004 H2.7 V6.3999999999999995 M0.6 6.8 H4.0" fill="none" stroke="#24507c" stroke-width="1.1"/></svg>
<svg style="left:56px;top:175px;overflow:visible;" width="16" height="15" viewBox="0 0 16 15"><path d="M8 .5 L15.5 3.4 V10.4 L8 13.6 L.5 10.4 V3.4 Z" fill="#7f8f9c" stroke="#6b6b58" stroke-width=".9" stroke-linejoin="round"/><path d="M1 3.9 L5.4 5.7 V12.3 L1 10.3 Z" fill="#52a444"/><path d="M1 3.9 L3.4 4.9 V11.4 L1 10.3 Z" fill="#74c260"/><path d="M15 3.9 L11 5.5 V12.1 L15 10.3 Z" fill="#dca444"/><path d="M15 3.9 L13.2 4.6 V11.1 L15 10.3 Z" fill="#c48a30"/><path d="M5.4 5.7 L8 6.9 V13.2 L5.4 12.3 Z" fill="#e8582e"/><path d="M8 6.9 L11 5.5 V12.1 L8 13.2 Z" fill="#a8100c"/><path d="M3.6 2.9 L8 1.2 L12.4 2.9 L8 4.7 Z" fill="#5f7f9e"/><path d="M5.6 5.5 L8 4.7 L10.8 5.4 L8 6.7 Z" fill="#c8523a"/></svg>
<svg style="left:56px;top:193px;overflow:visible;" width="16" height="15" viewBox="0 0 16 15"><path d="M8 .5 L15.5 3.4 V10.4 L8 13.6 L.5 10.4 V3.4 Z" fill="#7f8f9c" stroke="#6b6b58" stroke-width=".9" stroke-linejoin="round"/><path d="M1 3.9 L5.4 5.7 V12.3 L1 10.3 Z" fill="#52a444"/><path d="M1 3.9 L3.4 4.9 V11.4 L1 10.3 Z" fill="#74c260"/><path d="M15 3.9 L11 5.5 V12.1 L15 10.3 Z" fill="#dca444"/><path d="M15 3.9 L13.2 4.6 V11.1 L15 10.3 Z" fill="#c48a30"/><path d="M5.4 5.7 L8 6.9 V13.2 L5.4 12.3 Z" fill="#e8582e"/><path d="M8 6.9 L11 5.5 V12.1 L8 13.2 Z" fill="#a8100c"/><path d="M3.6 2.9 L8 1.2 L12.4 2.9 L8 4.7 Z" fill="#5f7f9e"/><path d="M5.6 5.5 L8 4.7 L10.8 5.4 L8 6.7 Z" fill="#c8523a"/></svg>
<svg style="left:44px;top:215px;" width="8" height="10" viewBox="0 0 8 10"><path d="M1.6 .9 L5.6 4.9 L1.6 8.9" fill="none" stroke="#a3a3a3" stroke-width="1.8"/></svg>
<svg style="left:58px;top:210px;overflow:visible;" width="11" height="14" viewBox="0 0 11 14"><path d="M.5 .5 H7.5 L10.5 3.5 V13.5 H.5 Z" fill="#fdfdfd" stroke="#989898" stroke-width="1" stroke-linejoin="round"/><path d="M7.5 .5 V3.5 H10.5 Z" fill="#e6dcae" stroke="#989898" stroke-width=".8" stroke-linejoin="round"/><rect x="3.5" y="5.5" width="5" height="5" fill="#e8eef8" stroke="#46577c" stroke-width="1"/><rect x="5" y="7" width="2" height="2" fill="#4f70a8"/><path d="M1.6 6.5h1.6M1.6 9.5h1.6M8.8 6.5h1.2M8.8 9.5h1.2M4.5 10.8v1.4M7.5 10.8v1.4" stroke="#46577c" stroke-width="1"/><path d="M2 12.5 H9.6" stroke="#8c96ac" stroke-width="1"/></svg>
<svg style="left:59px;top:229px;overflow:visible;" width="11" height="14" viewBox="0 0 11 14"><path d="M.5 .5 H7.5 L10.5 3.5 V13.5 H.5 Z" fill="#fbeef6" stroke="#98a0b4" stroke-width="1" stroke-linejoin="round"/><path d="M7.5 .5 V3.5 H10.5 Z" fill="#ece2b6" stroke="#98a0b4" stroke-width=".8" stroke-linejoin="round"/><path d="M4.4 4.2 Q3.2 4.2 3.2 5.373333333333333 V6.44 Q3.2 7.4 2.1 7.4 Q3.2 7.4 3.2 8.36 V9.426666666666666 Q3.2 10.600000000000001 4.4 10.600000000000001 M5.6 4.2 Q6.8 4.2 6.8 5.373333333333333 V6.44 Q6.8 7.4 7.8999999999999995 7.4 Q6.8 7.4 6.8 8.36 V9.426666666666666 Q6.8 10.600000000000001 5.6 10.600000000000001" fill="none" stroke="#8a1852" stroke-width="1.35"/></svg>
<svg style="left:59px;top:247px;overflow:visible;" width="11" height="14" viewBox="0 0 11 14"><path d="M.5 .5 H7.5 L10.5 3.5 V13.5 H.5 Z" fill="#fbeef6" stroke="#98a0b4" stroke-width="1" stroke-linejoin="round"/><path d="M7.5 .5 V3.5 H10.5 Z" fill="#ece2b6" stroke="#98a0b4" stroke-width=".8" stroke-linejoin="round"/><path d="M4.4 4.2 Q3.2 4.2 3.2 5.373333333333333 V6.44 Q3.2 7.4 2.1 7.4 Q3.2 7.4 3.2 8.36 V9.426666666666666 Q3.2 10.600000000000001 4.4 10.600000000000001 M5.6 4.2 Q6.8 4.2 6.8 5.373333333333333 V6.44 Q6.8 7.4 7.8999999999999995 7.4 Q6.8 7.4 6.8 8.36 V9.426666666666666 Q6.8 10.600000000000001 5.6 10.600000000000001" fill="none" stroke="#8a1852" stroke-width="1.35"/></svg>
<svg style="left:59px;top:265px;overflow:visible;" width="11" height="14" viewBox="0 0 11 14"><path d="M.5 .5 H7.5 L10.5 3.5 V13.5 H.5 Z" fill="#fbeef6" stroke="#98a0b4" stroke-width="1" stroke-linejoin="round"/><path d="M7.5 .5 V3.5 H10.5 Z" fill="#ece2b6" stroke="#98a0b4" stroke-width=".8" stroke-linejoin="round"/><path d="M4.4 4.2 Q3.2 4.2 3.2 5.373333333333333 V6.44 Q3.2 7.4 2.1 7.4 Q3.2 7.4 3.2 8.36 V9.426666666666666 Q3.2 10.600000000000001 4.4 10.600000000000001 M5.6 4.2 Q6.8 4.2 6.8 5.373333333333333 V6.44 Q6.8 7.4 7.8999999999999995 7.4 Q6.8 7.4 6.8 8.36 V9.426666666666666 Q6.8 10.600000000000001 5.6 10.600000000000001" fill="none" stroke="#8a1852" stroke-width="1.35"/></svg>
<svg style="left:44px;top:287px;" width="8" height="10" viewBox="0 0 8 10"><path d="M1.6 .9 L5.6 4.9 L1.6 8.9" fill="none" stroke="#a3a3a3" stroke-width="1.8"/></svg>
<svg style="left:58px;top:282px;overflow:visible;" width="11" height="14" viewBox="0 0 11 14"><path d="M.5 .5 H7.5 L10.5 3.5 V13.5 H.5 Z" fill="#fdfdfd" stroke="#989898" stroke-width="1" stroke-linejoin="round"/><path d="M7.5 .5 V3.5 H10.5 Z" fill="#e6dcae" stroke="#989898" stroke-width=".8" stroke-linejoin="round"/><rect x="3.5" y="5.5" width="5" height="5" fill="#e8eef8" stroke="#46577c" stroke-width="1"/><rect x="5" y="7" width="2" height="2" fill="#4f70a8"/><path d="M1.6 6.5h1.6M1.6 9.5h1.6M8.8 6.5h1.2M8.8 9.5h1.2M4.5 10.8v1.4M7.5 10.8v1.4" stroke="#46577c" stroke-width="1"/><path d="M2 12.5 H9.6" stroke="#8c96ac" stroke-width="1"/></svg>
<svg style="left:59px;top:301px;overflow:visible;" width="11" height="14" viewBox="0 0 11 14"><path d="M.5 .5 H7.5 L10.5 3.5 V13.5 H.5 Z" fill="#fbeef6" stroke="#98a0b4" stroke-width="1" stroke-linejoin="round"/><path d="M7.5 .5 V3.5 H10.5 Z" fill="#ece2b6" stroke="#98a0b4" stroke-width=".8" stroke-linejoin="round"/><path d="M4.4 4.2 Q3.2 4.2 3.2 5.373333333333333 V6.44 Q3.2 7.4 2.1 7.4 Q3.2 7.4 3.2 8.36 V9.426666666666666 Q3.2 10.600000000000001 4.4 10.600000000000001 M5.6 4.2 Q6.8 4.2 6.8 5.373333333333333 V6.44 Q6.8 7.4 7.8999999999999995 7.4 Q6.8 7.4 6.8 8.36 V9.426666666666666 Q6.8 10.600000000000001 5.6 10.600000000000001" fill="none" stroke="#8a1852" stroke-width="1.35"/></svg>
<svg style="left:56.8px;top:308.6px;" width="6" height="9" viewBox="0 0 6 9"><rect x="0" y="1" width="4.6" height="7.6" fill="#fff" opacity=".85"/><rect x="1.5" y="0.8" width="1.4" height="1.4" fill="#24507c"/><path d="M0.8 3.4000000000000004 H2.7 V6.3999999999999995 M0.6 6.8 H4.0" fill="none" stroke="#24507c" stroke-width="1.1"/></svg>
<svg style="left:59px;top:319px;overflow:visible;" width="11" height="14" viewBox="0 0 11 14"><path d="M.5 .5 H7.5 L10.5 3.5 V13.5 H.5 Z" fill="#fbeef6" stroke="#98a0b4" stroke-width="1" stroke-linejoin="round"/><path d="M7.5 .5 V3.5 H10.5 Z" fill="#ece2b6" stroke="#98a0b4" stroke-width=".8" stroke-linejoin="round"/><path d="M4.4 4.2 Q3.2 4.2 3.2 5.373333333333333 V6.44 Q3.2 7.4 2.1 7.4 Q3.2 7.4 3.2 8.36 V9.426666666666666 Q3.2 10.600000000000001 4.4 10.600000000000001 M5.6 4.2 Q6.8 4.2 6.8 5.373333333333333 V6.44 Q6.8 7.4 7.8999999999999995 7.4 Q6.8 7.4 6.8 8.36 V9.426666666666666 Q6.8 10.600000000000001 5.6 10.600000000000001" fill="none" stroke="#8a1852" stroke-width="1.35"/></svg>
<svg style="left:28px;top:341px;" width="8" height="10" viewBox="0 0 8 10"><path d="M1.6 .9 L5.6 4.9 L1.6 8.9" fill="none" stroke="#a3a3a3" stroke-width="1.8"/></svg>
<svg style="left:41px;top:339px;overflow:visible;" width="16" height="12" viewBox="0 0 16 12"><path d="M.5 9.5 V1.5 Q.5 .5 1.5 .5 H4.6 L6 2.1 H11.5 Q12.5 2.1 12.5 3.1 V4.5" fill="#fdf4d4" stroke="#c8963c" stroke-width="1"/><path d="M.6 10.5 L3 4.9 Q3.2 4.5 3.8 4.5 H14.4 Q15 4.5 14.7 5.2 L12.7 9.9 Q12.4 10.5 11.7 10.5 Z" fill="#fce5a2" stroke="#c8963c" stroke-width="1" stroke-linejoin="round"/></svg>
<svg style="left:28px;top:359px;" width="8" height="10" viewBox="0 0 8 10"><path d="M1.6 .9 L5.6 4.9 L1.6 8.9" fill="none" stroke="#a3a3a3" stroke-width="1.8"/></svg>
<svg style="left:41px;top:357px;overflow:visible;" width="16" height="12" viewBox="0 0 16 12"><path d="M.5 9.5 V1.5 Q.5 .5 1.5 .5 H4.6 L6 2.1 H11.5 Q12.5 2.1 12.5 3.1 V4.5" fill="#fdf4d4" stroke="#c8963c" stroke-width="1"/><path d="M.6 10.5 L3 4.9 Q3.2 4.5 3.8 4.5 H14.4 Q15 4.5 14.7 5.2 L12.7 9.9 Q12.4 10.5 11.7 10.5 Z" fill="#fce5a2" stroke="#c8963c" stroke-width="1" stroke-linejoin="round"/></svg>
<svg style="left:28px;top:377px;" width="8" height="10" viewBox="0 0 8 10"><path d="M1.6 .9 L5.6 4.9 L1.6 8.9" fill="none" stroke="#a3a3a3" stroke-width="1.8"/></svg>
<svg style="left:41px;top:375px;overflow:visible;" width="16" height="12" viewBox="0 0 16 12"><path d="M.5 9.5 V1.5 Q.5 .5 1.5 .5 H4.6 L6 2.1 H11.5 Q12.5 2.1 12.5 3.1 V4.5" fill="#fdf4d4" stroke="#c8963c" stroke-width="1"/><path d="M.6 10.5 L3 4.9 Q3.2 4.5 3.8 4.5 H14.4 Q15 4.5 14.7 5.2 L12.7 9.9 Q12.4 10.5 11.7 10.5 Z" fill="#fce5a2" stroke="#c8963c" stroke-width="1" stroke-linejoin="round"/></svg>
<svg style="left:28px;top:395px;" width="8" height="10" viewBox="0 0 8 10"><path d="M1.6 .9 L5.6 4.9 L1.6 8.9" fill="none" stroke="#a3a3a3" stroke-width="1.8"/></svg>
<svg style="left:41px;top:393px;overflow:visible;" width="16" height="12" viewBox="0 0 16 12"><path d="M.5 9.5 V1.5 Q.5 .5 1.5 .5 H4.6 L6 2.1 H11.5 Q12.5 2.1 12.5 3.1 V4.5" fill="#fdf4d4" stroke="#c8963c" stroke-width="1"/><path d="M.6 10.5 L3 4.9 Q3.2 4.5 3.8 4.5 H14.4 Q15 4.5 14.7 5.2 L12.7 9.9 Q12.4 10.5 11.7 10.5 Z" fill="#fce5a2" stroke="#c8963c" stroke-width="1" stroke-linejoin="round"/></svg>
<svg style="left:43px;top:409px;overflow:visible;" width="11" height="14" viewBox="0 0 11 14"><path d="M.5 .5 H7.5 L10.5 3.5 V13.5 H.5 Z" fill="#f7fafe" stroke="#9aa0aa" stroke-width="1" stroke-linejoin="round"/><path d="M7.5 .5 V3.5 H10.5 Z" fill="#ddd6a8" stroke="#9aa0aa" stroke-width=".8" stroke-linejoin="round"/><path d="M2 3.5h3.4M2 5.5h6.6M2 7.5h6.6M2 9.5h6.6M2 11.5h6.6" stroke="#5f88c8" stroke-width=".9"/></svg>
<svg style="left:43px;top:427px;overflow:visible;" width="11" height="14" viewBox="0 0 11 14"><path d="M.5 .5 H7.5 L10.5 3.5 V13.5 H.5 Z" fill="#f7fafe" stroke="#9aa0aa" stroke-width="1" stroke-linejoin="round"/><path d="M7.5 .5 V3.5 H10.5 Z" fill="#ddd6a8" stroke="#9aa0aa" stroke-width=".8" stroke-linejoin="round"/><path d="M2 3.5h3.4M2 5.5h6.6M2 7.5h6.6M2 9.5h6.6M2 11.5h6.6" stroke="#5f88c8" stroke-width=".9"/></svg>
<svg style="left:40.5px;top:444px;overflow:visible;" width="14" height="16" viewBox="0 0 14 16"><rect x="2" y="1" width="10" height="13.4" rx="1" fill="#eaf6f4" stroke="#1c8474" stroke-width="1.4"/><path d="M.4 3.2h2.8M.4 5.9h2.8M.4 8.6h2.8M.4 11.3h2.8" stroke="#1c8474" stroke-width="1.1"/><rect x="5.8" y="2.8" width="2.4" height="3" fill="#1e6e62"/><path d="M7 6.8v5.6" stroke="#2a7a6e" stroke-width="1.8" stroke-dasharray="1.4 .8"/></svg>
<svg style="left:42px;top:462px;overflow:visible;" width="13" height="15" viewBox="0 0 13 15"><path d="M2 .6 H8.5 L11.4 3.6 V13 Q11.4 14.4 10 14.4 H2 Q.6 14.4 .6 13 V2 Q.6 .6 2 .6 Z" fill="#fdecec" stroke="#c8322e" stroke-width="1.2"/><path d="M6 5.2 V8.2 L3.4 10.6 M6 8.2 L8.8 10" fill="none" stroke="#d0302c" stroke-width="1"/><circle cx="6" cy="4.8" r="1.1" fill="#fdecec" stroke="#d0302c" stroke-width=".9"/><circle cx="3.2" cy="10.8" r="1.1" fill="#fdecec" stroke="#d0302c" stroke-width=".9"/><circle cx="9" cy="10.2" r="1.1" fill="#fdecec" stroke="#d0302c" stroke-width=".9"/></svg>
<svg style="left:43px;top:481px;overflow:visible;" width="11" height="14" viewBox="0 0 11 14"><path d="M.5 .5 H7.5 L10.5 3.5 V13.5 H.5 Z" fill="#f7fafe" stroke="#9aa0aa" stroke-width="1" stroke-linejoin="round"/><path d="M7.5 .5 V3.5 H10.5 Z" fill="#ddd6a8" stroke="#9aa0aa" stroke-width=".8" stroke-linejoin="round"/><path d="M2 3.5h3.4M2 5.5h6.6M2 7.5h6.6M2 9.5h6.6M2 11.5h6.6" stroke="#5f88c8" stroke-width=".9"/></svg>
<svg style="left:43px;top:499px;overflow:visible;" width="11" height="14" viewBox="0 0 11 14"><path d="M.5 .5 H7.5 L10.5 3.5 V13.5 H.5 Z" fill="#f7fafe" stroke="#9aa0aa" stroke-width="1" stroke-linejoin="round"/><path d="M7.5 .5 V3.5 H10.5 Z" fill="#ddd6a8" stroke="#9aa0aa" stroke-width=".8" stroke-linejoin="round"/><path d="M2 3.5h3.4M2 5.5h6.6M2 7.5h6.6M2 9.5h6.6M2 11.5h6.6" stroke="#5f88c8" stroke-width=".9"/></svg>
<svg style="left:43px;top:517px;overflow:visible;" width="11" height="14" viewBox="0 0 11 14"><path d="M.5 .5 H7.5 L10.5 3.5 V13.5 H.5 Z" fill="#f7fafe" stroke="#9aa0aa" stroke-width="1" stroke-linejoin="round"/><path d="M7.5 .5 V3.5 H10.5 Z" fill="#ddd6a8" stroke="#9aa0aa" stroke-width=".8" stroke-linejoin="round"/><path d="M2 3.5h3.4M2 5.5h6.6M2 7.5h6.6M2 9.5h6.6M2 11.5h6.6" stroke="#5f88c8" stroke-width=".9"/></svg>
<svg style="left:43px;top:535px;overflow:visible;" width="11" height="14" viewBox="0 0 11 14"><path d="M.5 .5 H7.5 L10.5 3.5 V13.5 H.5 Z" fill="#f7fafe" stroke="#9aa0aa" stroke-width="1" stroke-linejoin="round"/><path d="M7.5 .5 V3.5 H10.5 Z" fill="#ddd6a8" stroke="#9aa0aa" stroke-width=".8" stroke-linejoin="round"/><path d="M2 3.5h3.4M2 5.5h6.6M2 7.5h6.6M2 9.5h6.6M2 11.5h6.6" stroke="#5f88c8" stroke-width=".9"/></svg>
<svg style="left:5.6px;top:78.6px;" width="16" height="16" viewBox="0 0 16 16"><path d="M1.5 .5 H6 L8.5 3 V9 H1.5 Z" fill="#fff" stroke="#9aa6b8" stroke-width=".9"/><path d="M3 3.5h3M3 5.5h4M3 7.5h3" stroke="#9ab0d0" stroke-width=".8"/><path d="M5.5 14.5 V7.5 Q5.5 6.8 6.2 6.8 H8.5 L9.6 8 H14 Q14.6 8 14.6 8.7 V14.5 Z" fill="#fbdf8c" stroke="#c9953c" stroke-width=".9" stroke-linejoin="round"/><path d="M6 9.6 H14" stroke="#fdf0c0" stroke-width="1"/></svg>
<svg style="left:115px;top:81px;" width="12" height="12" viewBox="0 0 12 12"><path d="M2.4 2.2 L9.8 9.6 M9.8 2.2 L2.4 9.6" stroke="#55647a" stroke-width="3.6" stroke-linecap="square"/><path d="M2.4 2.2 L9.8 9.6 M9.8 2.2 L2.4 9.6" stroke="#fff" stroke-width="1.9" stroke-linecap="square"/></svg>
<svg style="left:266px;top:80px;" width="16" height="16" viewBox="0 0 16 16"><rect x="1.5" y="1.5" width="9" height="9" fill="#e4eef9" stroke="#a9bcd4"/><rect x="3.5" y="3.5" width="10" height="10" fill="#dcebfa" stroke="#7f9cc0"/><path d="M5.5 8.5 H11.5" stroke="#1f4f7a" stroke-width="1.4"/></svg>
<svg style="left:287px;top:78px;" width="18" height="18" viewBox="0 0 18 18"><path d="M1 5.3 L6 1.2 V3.4 H13.4 V7.2 H6 V9.4 Z" fill="#fdeeb4" stroke="#d0962a" stroke-width="1" stroke-linejoin="round"/><path d="M16.8 12.3 L11.8 8.2 V10.4 H4.6 V14.2 H11.8 V16.4 Z" fill="#fdeeb4" stroke="#d0962a" stroke-width="1" stroke-linejoin="round"/></svg>
<svg style="left:319px;top:81px;" width="12" height="8" viewBox="0 0 12 8"><path d="M1.4 1.3 H10.2 L5.8 5.7 Z" fill="#fff" stroke="#4a4a4a" stroke-width="1.1"/></svg>
<svg style="left:340px;top:81px;" width="11" height="5" viewBox="0 0 11 5"><rect x=".5" y=".5" width="9" height="3" fill="#fff" stroke="#4a4a4a" stroke-width="1"/></svg>
<svg style="left:363px;top:81px;" width="11" height="11" viewBox="0 0 11 11"><rect x=".5" y=".5" width="9" height="9" fill="#fff" stroke="#4a4a4a" stroke-width="1"/><path d="M0 1.5 H10" stroke="#4a4a4a" stroke-width="1.4"/></svg>
<svg style="left:392px;top:80px;" width="16" height="15" viewBox="0 0 16 15"><path d="M8 .5 L15.5 3.4 V10.4 L8 13.6 L.5 10.4 V3.4 Z" fill="#7f8f9c" stroke="#6b6b58" stroke-width=".9" stroke-linejoin="round"/><path d="M1 3.9 L5.4 5.7 V12.3 L1 10.3 Z" fill="#52a444"/><path d="M1 3.9 L3.4 4.9 V11.4 L1 10.3 Z" fill="#74c260"/><path d="M15 3.9 L11 5.5 V12.1 L15 10.3 Z" fill="#dca444"/><path d="M15 3.9 L13.2 4.6 V11.1 L15 10.3 Z" fill="#c48a30"/><path d="M5.4 5.7 L8 6.9 V13.2 L5.4 12.3 Z" fill="#e8582e"/><path d="M8 6.9 L11 5.5 V12.1 L8 13.2 Z" fill="#a8100c"/><path d="M3.6 2.9 L8 1.2 L12.4 2.9 L8 4.7 Z" fill="#5f7f9e"/><path d="M5.6 5.5 L8 4.7 L10.8 5.4 L8 6.7 Z" fill="#c8523a"/></svg>
<svg style="left:572px;top:79px;" width="11" height="14" viewBox="0 0 11 14"><path d="M.5 .5 H7.5 L10.5 3.5 V13.5 H.5 Z" fill="#fdfdfd" stroke="#989898" stroke-width="1" stroke-linejoin="round"/><path d="M7.5 .5 V3.5 H10.5 Z" fill="#e6dcae" stroke="#989898" stroke-width=".8" stroke-linejoin="round"/><rect x="3.5" y="5.5" width="5" height="5" fill="#e8eef8" stroke="#46577c" stroke-width="1"/><rect x="5" y="7" width="2" height="2" fill="#4f70a8"/><path d="M1.6 6.5h1.6M1.6 9.5h1.6M8.8 6.5h1.2M8.8 9.5h1.2M4.5 10.8v1.4M7.5 10.8v1.4" stroke="#46577c" stroke-width="1"/><path d="M2 12.5 H9.6" stroke="#8c96ac" stroke-width="1"/></svg>
<svg style="left:397px;top:107px;" width="6" height="10" viewBox="0 0 6 10"><path d="M.3 .4 L5.3 5 L.3 9.6 Z" fill="#222"/></svg>
<svg style="left:411px;top:104px;" width="15" height="15" viewBox="0 0 15 15"><rect x=".5" y=".5" width="13.6" height="13.6" rx="1.2" fill="#d4d8e0" stroke="#8a8f9c" stroke-width=".9"/><rect x="3.5" y="3.2" width="7.6" height="6.6" fill="#f4f6fa" stroke="#444" stroke-width="1"/><rect x="6.4" y="5.6" width="1.8" height="1.8" fill="#222"/><path d="M1.2 5h2.3M1.2 8h2.3M11.1 5h2.3M11.1 8h2.3M5.4 9.8v2.2M9.2 9.8v2.2M3 12.2h8.6" stroke="#555" stroke-width=".9"/></svg>
<svg style="left:471px;top:107px;" width="6" height="10" viewBox="0 0 6 10"><path d="M.3 .4 L5.3 5 L.3 9.6 Z" fill="#222"/></svg>
<svg style="left:484px;top:103px;" width="16" height="16" viewBox="0 0 16 16"><rect x=".5" y=".5" width="15" height="15" fill="#fff" stroke="#9a3a2a" stroke-width="1" stroke-dasharray="2 1.4"/><text x="2.2" y="11" font-size="8.5" fill="#8a8a8a" font-family="Liberation Sans, sans-serif" letter-spacing="-.6">{...}</text></svg>
<span class="t d" style="left:491.4px;top:345.00px;height:14px;line-height:14px;font-size:11px;color:#000;letter-spacing:-0.365px;">calc</span>
<div style="left:492px;top:358px;width:113px;height:1px;background:#333;"></div>
<span class="t d" style="left:492px;top:358.00px;height:14px;line-height:14px;font-size:11px;color:#000;letter-spacing:-0.090px;">1/avgspeed_calculation</span>
<span class="t d" style="left:801.4px;top:345.00px;height:14px;line-height:14px;font-size:11px;color:#000;letter-spacing:-0.365px;">calc</span>
<div style="left:802px;top:358px;width:40px;height:1px;background:#333;"></div>
<span class="t d" style="left:802px;top:358.00px;height:14px;line-height:14px;font-size:11px;color:#000;letter-spacing:-0.090px;">2/avgspeed_calculation</span>
<div style="left:652px;top:375px;width:139px;height:119px;border:1px solid #333;background:linear-gradient(#fff 40%,#f8f8ff);"></div>
<svg style="left:0px;top:0px;" width="838" height="543" viewBox="0 0 838 543"><path d="M472.5 378.5 H522 L531.3 384.5 L522 390.5 H472.5 Z" fill="#fff" stroke="#333" stroke-width="1"/><path d="M472.5 398.5 H512 L521.3 404.5 L512 410.5 H472.5 Z" fill="#fff" stroke="#333" stroke-width="1"/><path d="M472.5 418.5 H522 L531.3 424.5 L522 430.5 H472.5 Z" fill="#fff" stroke="#333" stroke-width="1"/><path d="M477.5 449.5 H490.5 L501 454.5 L490.5 459.5 H477.5 Z" fill="#fff" stroke="#333"/><path d="M490.5 449.5 V459.5" stroke="#333"/><rect x="472" y="449" width="6" height="11" fill="#000"/><circle cx="484.5" cy="454.5" r="4" fill="#6c9bd2" stroke="#2b4f85" stroke-width="1"/><path d="M482.5 453.5h4M482.5 455.5h4" stroke="#fff" stroke-width="1"/><path d="M531 384.5 H649" stroke="#000" stroke-width="1" fill="none"/><path d="M652.2 384.5 L647.6 380.9 V388.1 Z" fill="#000"/><path d="M522 404.5 H649" stroke="#000" stroke-width="1" fill="none"/><path d="M652.2 404.5 L647.6 400.9 V408.1 Z" fill="#000"/><path d="M531 424.5 H541.5" stroke="#000" stroke-width="1" fill="none"/><path d="M548.2 424.5 H648" stroke="#000" stroke-width="1" fill="none" stroke-dasharray="7 6.8"/><path d="M652.2 424.5 L647.6 420.9 V428.1 Z" fill="#000"/><path d="M501 454.5 H649" stroke="#000" stroke-width="1" fill="none"/><path d="M652.2 454.5 L647.6 450.9 V458.1 Z" fill="#000"/><path d="M791 414.5 H838" stroke="#000" stroke-width="1"/><rect x="715.5" y="431.5" width="12" height="9" rx="1.5" fill="#cc2a36" stroke="#8e1f2a"/><rect x="714.5" y="428.5" width="9" height="3" fill="#b9b9b9" stroke="#777" stroke-width=".8"/><rect x="718" y="431" width="5" height="3" fill="#e06a72"/></svg>
<span class="t d" style="left:473px;top:377.00px;height:14px;line-height:14px;font-size:11px;color:#111;letter-spacing:-0.480px;">v_mps</span>
<span class="t d" style="left:473px;top:397.00px;height:14px;line-height:14px;font-size:11px;color:#111;letter-spacing:0.221px;">dist</span>
<span class="t d" style="left:473px;top:417.00px;height:14px;line-height:14px;font-size:11px;color:#111;letter-spacing:-0.010px;">c_reset</span>
<span class="t d" style="left:472px;top:469.00px;height:14px;line-height:14px;font-size:11px;color:#000;letter-spacing:-0.050px;">dt_10ms : real</span>
<span class="t d" style="left:655px;top:379.00px;height:14px;line-height:14px;font-size:11px;color:#111;letter-spacing:-0.380px;">v_mps</span>
<span class="t d" style="left:655px;top:399.00px;height:14px;line-height:14px;font-size:11px;color:#111;letter-spacing:-0.029px;">dist</span>
<span class="t d" style="left:655px;top:419.00px;height:14px;line-height:14px;font-size:11px;color:#111;letter-spacing:-0.010px;">c_reset</span>
<span class="t d" style="left:655px;top:449.00px;height:14px;line-height:14px;font-size:11px;color:#111;letter-spacing:-0.051px;">dtVal</span>
<span class="t d" style="left:723px;top:409.00px;height:14px;line-height:14px;font-size:11px;color:#111;letter-spacing:-0.078px;">getAvgSpeed</span>
<span class="t " style="left:725px;top:424.00px;height:12px;line-height:12px;font-size:11px;color:#000040;font-weight:bold;">s</span>
<span class="t d" style="left:652px;top:495.00px;height:14px;line-height:14px;font-size:11px;color:#000;letter-spacing:-0.061px;">AverageSpeed_inst : AverageSpeed</span>
<div style="left:115px;top:209px;width:66px;height:8px;background:#cce8ff;"></div>
<div style="left:149px;top:214px;width:1px;height:2px;background:#222;"></div>
<div style="left:166px;top:214px;width:1px;height:2px;background:#222;"></div>
<div style="left:177px;top:214px;width:1px;height:2px;background:#222;"></div>
<div style="left:115px;top:216px;width:309px;height:340px;background:#f2f2f2;border:1px solid #c4c4c4;border-right-color:#b4b4b4;box-shadow:3px 3px 2.5px -1px rgba(0,0,0,.55);"></div>
<span class="t " style="left:150px;top:221.50px;height:16px;line-height:16px;font-size:12px;color:#000;letter-spacing:-0.002px;">New</span>
<svg style="left:406px;top:224.5px;" width="8" height="10" viewBox="0 0 8 10"><path d="M2 1.5 L6 5 L2 8.5" stroke="#222" stroke-width="1.1" fill="none"/></svg>
<div style="left:146px;top:244px;width:275px;height:1px;background:#d7d7d7;"></div>
<span class="t " style="left:150px;top:250.50px;height:16px;line-height:16px;font-size:12px;color:#000;letter-spacing:-0.089px;">Open</span>
<span class="t " style="left:391px;top:250.50px;height:16px;line-height:16px;font-size:12px;color:#000;letter-spacing:-0.752px;">F3</span>
<span class="t " style="left:150px;top:272.50px;height:16px;line-height:16px;font-size:12px;color:#000;letter-spacing:0.034px;">Open With</span>
<svg style="left:406px;top:275.5px;" width="8" height="10" viewBox="0 0 8 10"><path d="M2 1.5 L6 5 L2 8.5" stroke="#222" stroke-width="1.1" fill="none"/></svg>
<div style="left:118px;top:291.5px;width:301px;height:22px;background:#91c9f7;"></div>
<span class="t " style="left:150px;top:294.50px;height:16px;line-height:16px;font-size:12px;color:#000;letter-spacing:0.079px;">Linked Documentation</span>
<svg style="left:406px;top:297.5px;" width="8" height="10" viewBox="0 0 8 10"><path d="M2 1.5 L6 5 L2 8.5" stroke="#222" stroke-width="1.1" fill="none"/></svg>
<div style="left:146px;top:317px;width:275px;height:1px;background:#d7d7d7;"></div>
<span class="t " style="left:150px;top:323.50px;height:16px;line-height:16px;font-size:12px;color:#000;letter-spacing:-0.004px;">Copy</span>
<span class="t " style="left:368.5px;top:323.50px;height:16px;line-height:16px;font-size:12px;color:#000;letter-spacing:0.111px;">Ctrl+C</span>
<span class="t " style="left:150px;top:345.50px;height:16px;line-height:16px;font-size:12px;color:#6d6d6d;letter-spacing:-0.437px;">Paste</span>
<span class="t " style="left:369px;top:345.50px;height:16px;line-height:16px;font-size:12px;color:#6d6d6d;letter-spacing:0.138px;">Ctrl+V</span>
<span class="t " style="left:150px;top:367.50px;height:16px;line-height:16px;font-size:12px;color:#000;letter-spacing:-0.198px;">Delete</span>
<span class="t " style="left:370px;top:367.50px;height:16px;line-height:16px;font-size:12px;color:#000;letter-spacing:-0.198px;">Delete</span>
<span class="t " style="left:150px;top:389.50px;height:16px;line-height:16px;font-size:12px;color:#000;letter-spacing:-0.049px;">Move...</span>
<span class="t " style="left:150px;top:411.50px;height:16px;line-height:16px;font-size:12px;color:#000;letter-spacing:-0.429px;">Rename...</span>
<span class="t " style="left:391px;top:411.50px;height:16px;line-height:16px;font-size:12px;color:#000;letter-spacing:-0.752px;">F2</span>
<div style="left:146px;top:434px;width:275px;height:1px;background:#d7d7d7;"></div>
<span class="t " style="left:150px;top:440.50px;height:16px;line-height:16px;font-size:12px;color:#000;letter-spacing:0.110px;">Import...</span>
<span class="t " style="left:150px;top:462.50px;height:16px;line-height:16px;font-size:12px;color:#000;letter-spacing:-0.298px;">Export...</span>
<div style="left:146px;top:485px;width:275px;height:1px;background:#d7d7d7;"></div>
<span class="t " style="left:150px;top:491.50px;height:16px;line-height:16px;font-size:12px;color:#000;letter-spacing:-0.431px;">Refresh</span>
<span class="t " style="left:391px;top:491.50px;height:16px;line-height:16px;font-size:12px;color:#000;letter-spacing:-0.752px;">F5</span>
<div style="left:146px;top:514px;width:275px;height:1px;background:#d7d7d7;"></div>
<span class="t " style="left:150px;top:520.50px;height:16px;line-height:16px;font-size:12px;color:#000;letter-spacing:-0.185px;">Validate</span>
<div style="left:418px;top:289px;width:124px;height:50px;background:#f2f2f2;border:1px solid #c4c4c4;border-right-color:#b4b4b4;border-bottom-color:#b4b4b4;box-shadow:3px 3px 2.5px -1px rgba(0,0,0,.55);"></div>
<div style="left:421px;top:292px;width:118px;height:22px;background:#91c9f7;"></div>
<span class="t " style="left:453.5px;top:294.50px;height:16px;line-height:16px;font-size:12px;color:#000;letter-spacing:-0.336px;">Create</span>
<span class="t " style="left:453.5px;top:316.50px;height:16px;line-height:16px;font-size:12px;color:#000;letter-spacing:0.121px;">Link</span>
<svg style="left:518px;top:306px;" width="16" height="22" viewBox="0 0 16 22"><path d="M1.5 1.5 V17.5 L5.5 13.8 L8.3 20 L10.8 18.9 L8.1 12.9 H13.3 Z" fill="#fff" stroke="#000" stroke-width="1" stroke-linejoin="miter"/></svg>
<svg style="left:122px;top:325px;overflow:visible;" width="16" height="16" viewBox="0 0 16 16"><path d="M.5 1.5 H6.5 L9 4 V11.5 H.5 Z" fill="#fdfdfd" stroke="#8a9bb4" stroke-width=".9"/><path d="M6.5 1.5 V4 H9" fill="#f2e6b8" stroke="#b9a86a" stroke-width=".7"/><path d="M2 4.5h3M2 6.5h2M2 8.5h2" stroke="#6f97cf" stroke-width=".8"/><path d="M4.5 4.5 H10.5 L13.5 7.5 V14.5 H4.5 Z" fill="#fdfdfd" stroke="#8a9bb4" stroke-width=".9"/><path d="M10.5 4.5 V7.5 H13.5" fill="#f2e6b8" stroke="#b9a86a" stroke-width=".7"/><path d="M6 7.5h3.2M6 9.5h6M6 11.5h6M6 13.2h6" stroke="#5a8ad0" stroke-width=".8"/></svg>
<svg style="left:123px;top:347.3px;overflow:visible;" width="16" height="16" viewBox="0 0 16 16"><rect x=".6" y="1.8" width="10" height="12" rx="1" fill="#d9d9d9" stroke="#bdbdbd" stroke-width=".9"/><rect x="3.2" y=".5" width="4.8" height="2.8" rx=".8" fill="#e6e6e6" stroke="#bdbdbd" stroke-width=".8"/><path d="M5.5 6 H10 L12.5 8.5 V14.3 H5.5 Z" fill="#f3f3f3" stroke="#bdbdbd" stroke-width=".9"/><path d="M7 9.5h3M7 11.5h4" stroke="#c8c8c8" stroke-width=".8"/></svg>
<svg style="left:123px;top:369.6px;overflow:visible;" width="16" height="16" viewBox="0 0 16 16"><path d="M2.6 2.6 L10.4 10.2 M10.4 2.6 L2.6 10.2" stroke="#d8343a" stroke-width="4.2" stroke-linecap="round"/><path d="M2.6 2.4 L6.4 6 L10.2 2.4" stroke="#f17a7a" stroke-width="1.3" stroke-linecap="round" fill="none" opacity=".7"/></svg>
<svg style="left:121px;top:443.4px;overflow:visible;" width="16" height="16" viewBox="0 0 16 16"><path d="M.6 6.5 H3.4 V9.4 H11.6 V6.5 H14.4 V12.4 H.6 Z" fill="#c9d6ee" stroke="#6f88b8" stroke-width="1" stroke-linejoin="round"/><path d="M1.5 10.8 H13.5" stroke="#8aa0cc" stroke-width="1"/><path d="M2.6 .4 L9 6.8" stroke="#6a7a94" stroke-width="1.1"/><path d="M9.4 7.2 V3.4 M9.4 7.2 H5.6" stroke="#6a7a94" stroke-width="1.1" fill="none"/></svg>
<svg style="left:121px;top:465px;overflow:visible;" width="16" height="16" viewBox="0 0 16 16"><path d="M.6 6.5 H3.4 V9.4 H11.6 V6.5 H14.4 V12.4 H.6 Z" fill="#c9d6ee" stroke="#6f88b8" stroke-width="1" stroke-linejoin="round"/><path d="M1.5 10.8 H13.5" stroke="#8aa0cc" stroke-width="1"/><path d="M4.6 7.6 L11.6 .9" stroke="#6a7a94" stroke-width="1.1"/><path d="M12.2 .3 V4 M12.2 .4 H8.4" stroke="#6a7a94" stroke-width="1.1" fill="none"/></svg>
<svg style="left:122.6px;top:492.6px;overflow:visible;" width="16" height="16" viewBox="0 0 16 16"><path d="M3.5 .6 H9.5 L12.5 3.6 V13.5 H3.5 Z" fill="#fafafc" stroke="#a8a49a" stroke-width="1"/><path d="M9.5 .6 V3.6 H12.5" fill="#f3e8b8" stroke="#a8a49a" stroke-width=".8"/><path d="M6.6 4.2 Q3.4 3.4 2.6 6.4 L.8 6 L3 9 L5.6 6.8 L4.2 6.5 Q4.8 5 6.6 5.6 Z" fill="#f6d868" stroke="#c69a1c" stroke-width=".7" stroke-linejoin="round"/><path d="M2.4 11.8 Q5.6 12.8 6.6 9.8 L8.4 10.2 L6.2 7.2 L3.6 9.4 L5 9.7 Q4.4 11 2.4 10.4 Z" fill="#f6d868" stroke="#c69a1c" stroke-width=".7" stroke-linejoin="round"/></svg>
</div></body></html>
